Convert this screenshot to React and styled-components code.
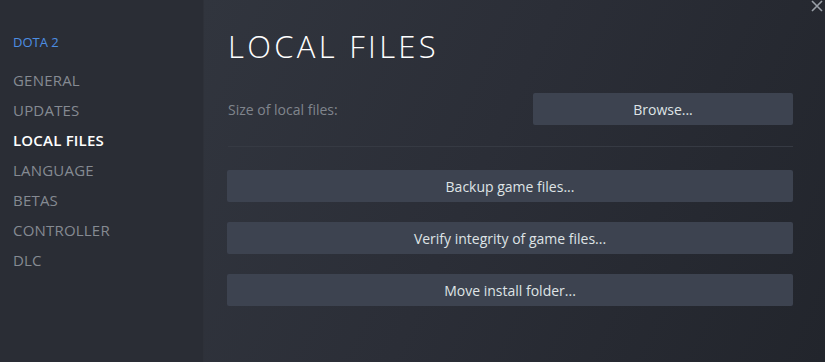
import React from "react";
import styled, { createGlobalStyle } from "styled-components";

const GlobalStyle = createGlobalStyle`
	html, body {
		margin: 0;
		padding: 0;
		background: #2a2d35;
	}
	* {
		box-sizing: border-box;
	}
`;

const navItems = ["GENERAL", "UPDATES", "LOCAL FILES", "LANGUAGE", "BETAS", "CONTROLLER", "DLC"];
const actions = ["Backup game files...", "Verify integrity of game files...", "Move install folder..."];

const App = () => {
	return (
		<Window>
			<GlobalStyle />
			<Sidebar>
				<GameTitle>DOTA 2</GameTitle>
				<NavList>
					{navItems.map((item) => (
						<NavItem key={item} active={item === "LOCAL FILES"}>
							{item}
						</NavItem>
					))}
				</NavList>
			</Sidebar>
			<Main>
				<CloseButton aria-label="close">
					<svg width="12" height="12" viewBox="0 0 12 12">
						<path d="M1 1 L11 11 M11 1 L1 11" stroke="#9aa0a8" strokeWidth="1.6" />
					</svg>
				</CloseButton>
				<PageTitle>LOCAL FILES</PageTitle>
				<SizeRow>
					<SizeLabel>Size of local files:</SizeLabel>
					<BrowseButton>Browse...</BrowseButton>
				</SizeRow>
				<Divider />
				<ActionList>
					{actions.map((label) => (
						<ActionButton key={label}>{label}</ActionButton>
					))}
				</ActionList>
			</Main>
		</Window>
	);
};

export default App;

const Window = styled.div`
	display: flex;
	width: 825px;
	height: 362px;
	overflow: hidden;
	font-family: "Open Sans", "Noto Sans", sans-serif;
`;

const Sidebar = styled.div`
	width: 203px;
	flex-shrink: 0;
	background: #2a2d35;
	padding: 33px 0 0 13px;
`;

const GameTitle = styled.div`
	color: #4d8ee3;
	font-size: 13px;
	line-height: 18px;
	margin-bottom: 14px;
`;

const NavList = styled.div`
	display: flex;
	flex-direction: column;
`;

const NavItem = styled.div`
	font-size: 15px;
	line-height: 30px;
	height: 30px;
	color: ${(p) => (p.active ? "#ffffff" : "#858a92")};
	font-weight: ${(p) => (p.active ? 600 : 400)};
	letter-spacing: 0.2px;
`;

const Main = styled.div`
	position: relative;
	flex: 1;
	background: linear-gradient(115deg, #31353e 0%, #2b2e37 45%, #22252c 100%);
	padding: 25px 32px 0 24px;
	box-shadow: inset 1px 0 0 #2e3139;
`;

const CloseButton = styled.div`
	position: absolute;
	top: 0;
	right: 2px;
	line-height: 0;
`;

const PageTitle = styled.h1`
	margin: 0 0 0 1px;
	font-family: "Open Sans", sans-serif;
	font-weight: 300;
	font-size: 31px;
	line-height: 42px;
	letter-spacing: 3.3px;
	color: #ffffff;
`;

const SizeRow = styled.div`
	display: flex;
	align-items: center;
	justify-content: space-between;
	margin-top: 26px;
`;

const SizeLabel = styled.div`
	font-size: 14px;
	color: #80858d;
	padding-left: 1px;
`;

const Button = styled.div`
	height: 32px;
	display: flex;
	align-items: center;
	justify-content: center;
	background: #3d4350;
	border-radius: 2px;
	color: #dfe3e6;
	font-size: 14px;
`;

const BrowseButton = styled(Button)`
	width: 260px;
`;

const Divider = styled.div`
	height: 1px;
	background: #363a43;
	margin: 21px 0 0 1px;
`;

const ActionList = styled.div`
	display: flex;
	flex-direction: column;
	gap: 20px;
	margin-top: 23px;
`;

const ActionButton = styled(Button)`
	width: 100%;
`;
